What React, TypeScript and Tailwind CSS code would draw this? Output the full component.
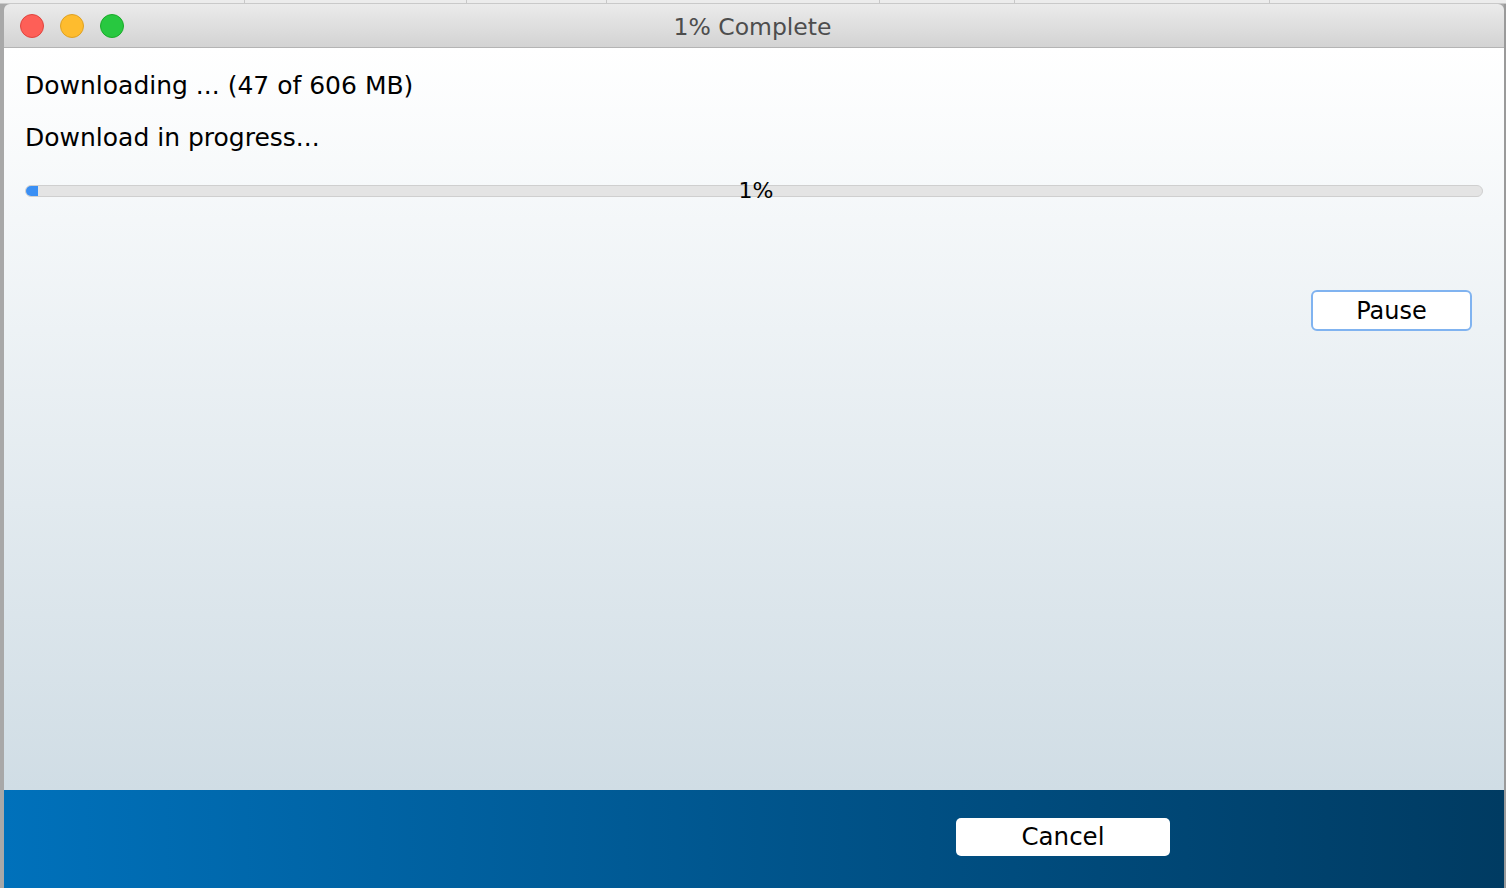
import React from "react";

const font = { fontFamily: '"DejaVu Sans", "Lucida Grande", Verdana, sans-serif' };

export default function App() {
  return (
    <div className="w-[1506px] h-[888px] flex flex-col overflow-hidden bg-[#a9a9a9]" style={font}>
      {/* strip of window behind */}
      <div className="h-[4px] flex bg-[#ececec] border-b border-[#c9c9c9]">
        <div className="w-[245px] border-r border-[#c8c8c8]" />
        <div className="w-[222px] border-r border-[#c8c8c8]" />
        <div className="w-[140px] border-r border-[#c8c8c8]" />
        <div className="w-[273px] border-r border-[#c8c8c8]" />
        <div className="w-[135px] border-r border-[#c8c8c8]" />
        <div className="w-[255px] border-r border-[#c8c8c8]" />
        <div className="flex-1" />
      </div>
      <div className="flex-1 flex">
        <div className="w-[4px] bg-[#a8a8a8]" />
        <div className="flex-1 flex flex-col rounded-t-[6px] overflow-hidden">
          {/* title bar */}
          <div className="h-[44px] flex items-center relative bg-gradient-to-b from-[#ebebeb] to-[#d3d3d3] border-b border-[#b4b4b4]">
            <div className="flex items-center gap-[16px] pl-[16px]">
              <div className="w-[24px] h-[24px] rounded-full bg-[#fe5f57] border border-[#e0443e]" />
              <div className="w-[24px] h-[24px] rounded-full bg-[#febc2e] border border-[#dea123]" />
              <div className="w-[24px] h-[24px] rounded-full bg-[#28c840] border border-[#1aab29]" />
            </div>
            <div className="absolute inset-0 flex items-center justify-center text-[23.5px] text-[#4d4d4d] pr-[3px] pt-[4px]">
              1% Complete
            </div>
          </div>
          {/* body */}
          <div className="flex-1 flex flex-col bg-gradient-to-b from-[#ffffff] to-[#d0dde5] px-[21px]">
            <div className="mt-[23px] text-[25px] text-black leading-[30px]">Downloading ... (47 of 606 MB)</div>
            <div className="mt-[22px] text-[25px] text-black leading-[30px]">Download in progress...</div>
            <div className="mt-[32px] relative h-[12px]">
              <div className="absolute inset-0 rounded-full bg-[#e4e4e4] border border-[#cfcfcf] overflow-hidden">
                <div className="h-full w-[12px] bg-[#3a8ff4]" />
              </div>
              <div className="absolute inset-0 flex items-center justify-center text-[22px] text-black leading-none pl-[4px]">
                1%
              </div>
            </div>
            <div className="mt-[93px] flex justify-end pr-[11px]">
              <div className="w-[161px] h-[41px] rounded-[6px] bg-white border-[2px] border-[#80b3f0] flex items-center justify-center text-[24px] text-black">
                Pause
              </div>
            </div>
          </div>
          {/* footer */}
          <div className="h-[98px] flex items-center justify-end bg-gradient-to-r from-[#0071bb] to-[#003b62] pr-[334px] pb-[4px]">
            <div className="w-[214px] h-[38px] rounded-[5px] bg-white flex items-center justify-center text-[24.5px] text-black">
              Cancel
            </div>
          </div>
        </div>
        <div className="w-[2px] bg-[#9a9a9a]" />
      </div>
    </div>
  );
}
